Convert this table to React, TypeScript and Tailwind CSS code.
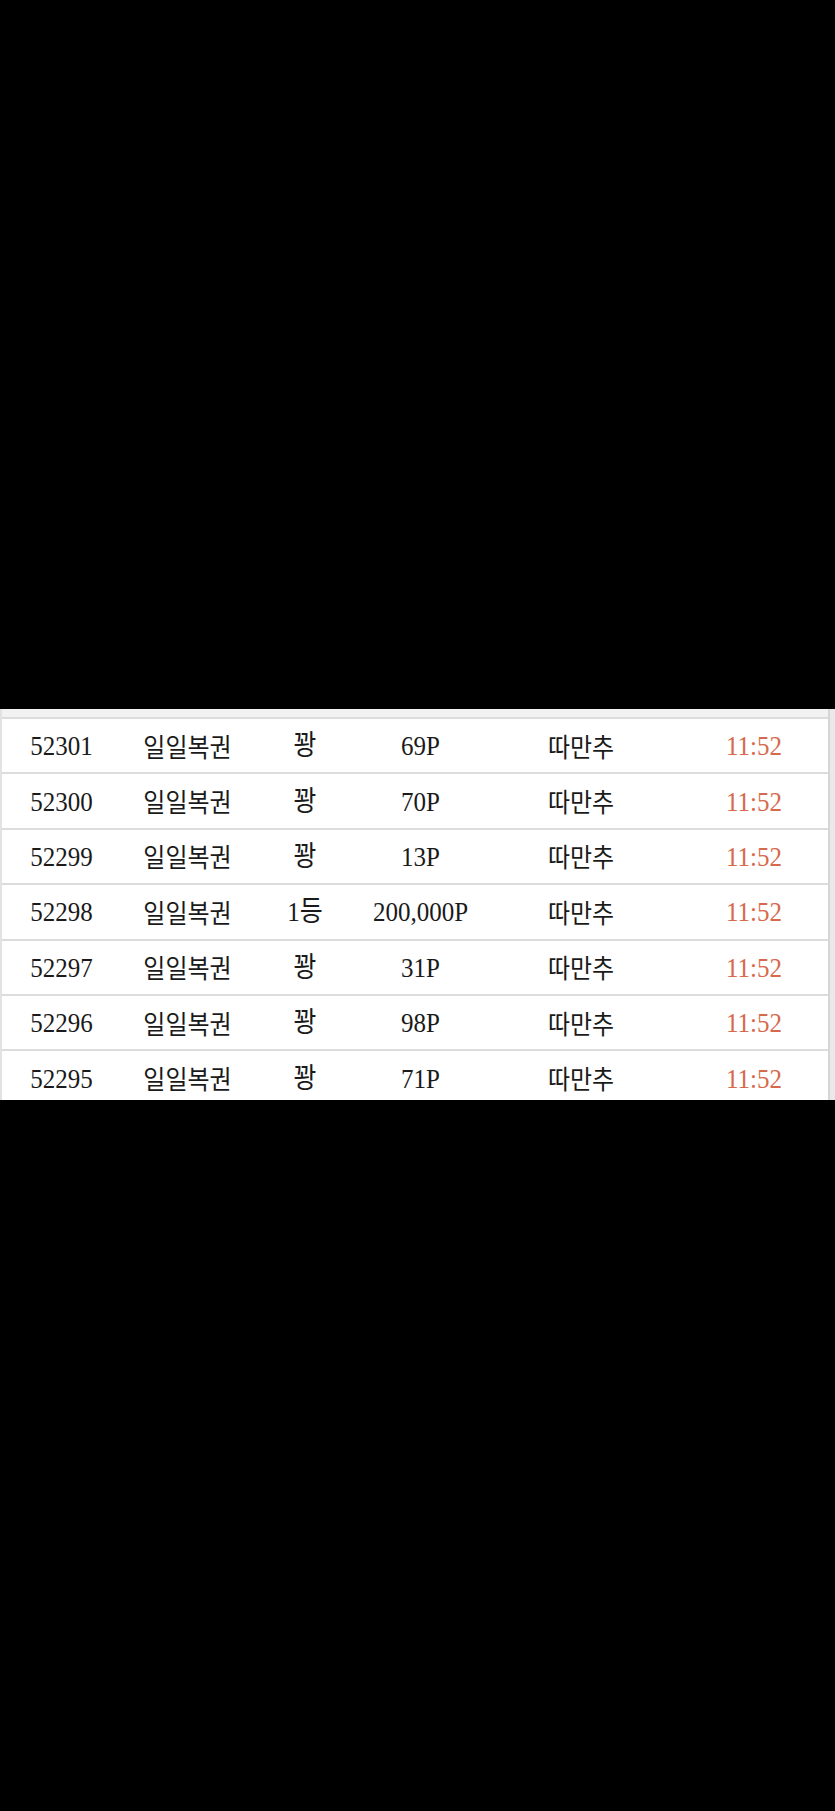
import React from "react";

const rows = [
  { id: "52301", prize: "꽝", pt: "69P" },
  { id: "52300", prize: "꽝", pt: "70P" },
  { id: "52299", prize: "꽝", pt: "13P" },
  { id: "52298", prize: "1등", pt: "200,000P" },
  { id: "52297", prize: "꽝", pt: "31P" },
  { id: "52296", prize: "꽝", pt: "98P" },
  { id: "52295", prize: "꽝", pt: "71P" },
];

const serif = "font-['Liberation_Serif','Noto_Sans_CJK_KR',serif]";
const kr = "font-['Noto_Sans_CJK_KR',sans-serif]";

export default function App() {
  return (
    <div className="w-[835px] h-[1811px] bg-black flex flex-col">
      <div className="h-[709px] shrink-0" />
      <div className="h-[391px] shrink-0 overflow-hidden flex bg-[#ececec]">
        <div className="w-[2px] bg-[#e2e2e2]" />
        <div className="w-[826px] flex flex-col">
          <div className="h-[8px] shrink-0 bg-[#f2f2f2] border-b-2 border-[#dcdcdc] box-content" />
          {rows.map((r) => (
            <div
              key={r.id}
              className="h-[53.4px] shrink-0 box-content bg-white border-b-2 border-[#dcdcdc] grid grid-cols-[119px_133px_102px_129px_192px_1fr] items-center text-center text-[#1a1a1a]"
            >
              <span className={`${serif} text-[25px] leading-none scale-y-[1.12]`}>{r.id}</span>
              <span className={`${kr} text-[24px] leading-none scale-y-[1.08]`}>일일복권</span>
              <span className={`${serif} text-[25px] leading-none scale-y-[1.12]`}>{r.prize}</span>
              <span className={`${serif} text-[25px] leading-none scale-y-[1.12]`}>{r.pt}</span>
              <span className={`${kr} text-[24px] leading-none scale-y-[1.08]`}>따만추</span>
              <span className={`${serif} text-[25px] leading-none scale-y-[1.12] text-[#d6694c] pl-[3px]`}>11:52</span>
            </div>
          ))}
        </div>
        <div className="w-[2px] bg-[#d6d6d6]" />
        <div className="flex-1 bg-[#e9e9e9]" />
      </div>
    </div>
  );
}
